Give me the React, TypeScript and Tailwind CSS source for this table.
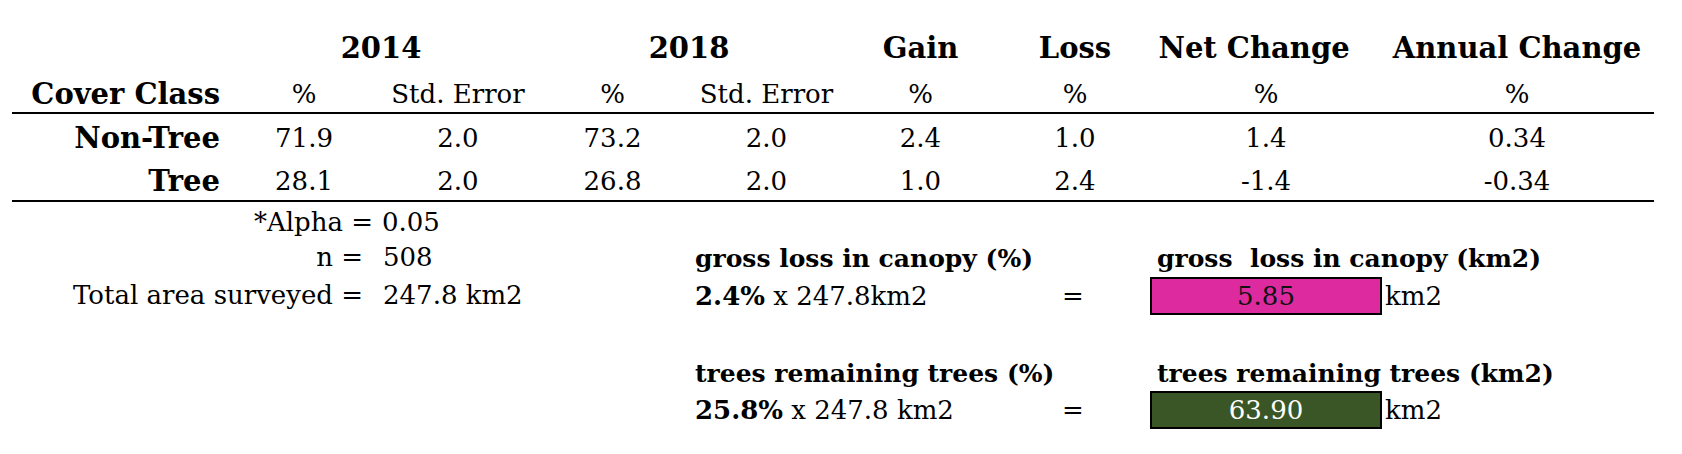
const cols = "grid grid-cols-[215px_154px_154px_155px_153px_155px_154px_228px_274px]";

function HeadRow() {
  return (
    <div className={`${cols} h-[36px] items-start text-[29px] font-bold leading-[36px]`}>
      <div />
      <div className="col-span-2 text-center">2014</div>
      <div className="col-span-2 text-center">2018</div>
      <div className="text-center">Gain</div>
      <div className="text-center">Loss</div>
      <div className="whitespace-nowrap pr-[24px] text-center">Net Change</div>
      <div className="whitespace-nowrap text-center">Annual Change</div>
    </div>
  );
}

function SubHeadRow() {
  const cells = ["%", "Std. Error", "%", "Std. Error", "%", "%", "%", "%"];
  return (
    <div className={`${cols} mt-[10px] h-[36px] text-[26px] leading-[36px]`}>
      <div className="pr-[7px] text-right text-[29px] font-bold">Cover Class</div>
      {cells.map((c, i) => (
        <div key={i} className="text-center">
          {c}
        </div>
      ))}
    </div>
  );
}

function DataRow({
  label,
  values,
  className,
}: {
  label: string;
  values: string[];
  className: string;
}) {
  return (
    <div className={`${cols} text-[26px] ${className}`}>
      <div className="pr-[7px] text-right text-[29px] font-bold">{label}</div>
      {values.map((v, i) => (
        <div key={i} className="text-center">
          {v}
        </div>
      ))}
    </div>
  );
}

function ResultBox({ value, tone }: { value: string; tone: "pink" | "green" }) {
  return (
    <div className="flex items-center">
      <div
        className={
          tone === "pink"
            ? "-ml-[2px] flex h-[38px] w-[232px] shrink-0 items-center justify-center border-2 border-black bg-[#dd2a9e] leading-[34px] text-[#111]"
            : "-ml-[2px] flex h-[38px] w-[232px] shrink-0 items-center justify-center border-2 border-black bg-[#3a5626] leading-[34px] text-white"
        }
      >
        {value}
      </div>
    </div>
  );
}

export default function App() {
  return (
    <div className="h-[454px] w-[1682px] bg-white pl-[12px] pt-[30px] text-black [font-family:'DejaVu_Serif',serif]">
      <div className="w-[1642px]">
        <HeadRow />
        <SubHeadRow />
        <div className="border-y-2 border-black">
          <DataRow
            label="Non-Tree"
            values={["71.9", "2.0", "73.2", "2.0", "2.4", "1.0", "1.4", "0.34"]}
            className="h-[44px] leading-[48px]"
          />
          <DataRow
            label="Tree"
            values={["28.1", "2.0", "26.8", "2.0", "1.0", "2.4", "-1.4", "-0.34"]}
            className="h-[42px] leading-[46px]"
          />
        </div>

        <div className="grid grid-cols-[523px_155px_964px]">
          {/* left notes */}
          <div className="pt-[5px] text-[26px] leading-[31px]">
            <div className="flex h-[31px]">
              <div className="w-[361px] text-right">*Alpha =</div>
              <div className="pl-[9px]">0.05</div>
            </div>
            <div className="mt-[4px] flex h-[31px]">
              <div className="w-[351px] text-right">n =</div>
              <div className="pl-[20px]">508</div>
            </div>
            <div className="mt-[7px] flex h-[31px]">
              <div className="w-[351px] text-right">Total area surveyed =</div>
              <div className="whitespace-nowrap pl-[20px]">247.8 km2</div>
            </div>
          </div>
          <div />

          {/* calculations */}
          <div className="pt-[39px] text-[26px]">
            <div className="grid h-[36px] grid-cols-[308px_154px_228px_274px] pt-[3px] text-[25px] font-bold leading-[30px]">
              <div className="whitespace-nowrap pl-[5px]">gross loss in canopy (%)</div>
              <div />
              <div className="whitespace-pre pl-[5px]">gross  loss in canopy (km2)</div>
              <div />
            </div>
            <div className="grid h-[38px] grid-cols-[308px_154px_228px_274px] leading-[38px]">
              <div className="whitespace-nowrap pl-[5px]">
                <span className="font-bold">2.4%</span> x 247.8km2
              </div>
              <div className="pr-[4px] text-center">=</div>
              <ResultBox value="5.85" tone="pink" />
              <div className="pl-[5px]">km2</div>
            </div>
            <div className="mt-[41px] grid h-[35px] grid-cols-[308px_154px_228px_274px] pt-[3px] text-[25px] font-bold leading-[30px]">
              <div className="whitespace-nowrap pl-[5px]">trees remaining trees (%)</div>
              <div />
              <div className="whitespace-nowrap pl-[5px]">trees remaining trees (km2)</div>
              <div />
            </div>
            <div className="grid h-[38px] grid-cols-[308px_154px_228px_274px] leading-[38px]">
              <div className="whitespace-nowrap pl-[5px]">
                <span className="font-bold">25.8%</span> x 247.8 km2
              </div>
              <div className="pr-[4px] text-center">=</div>
              <ResultBox value="63.90" tone="green" />
              <div className="pl-[5px]">km2</div>
            </div>
          </div>
        </div>
      </div>
    </div>
  );
}
